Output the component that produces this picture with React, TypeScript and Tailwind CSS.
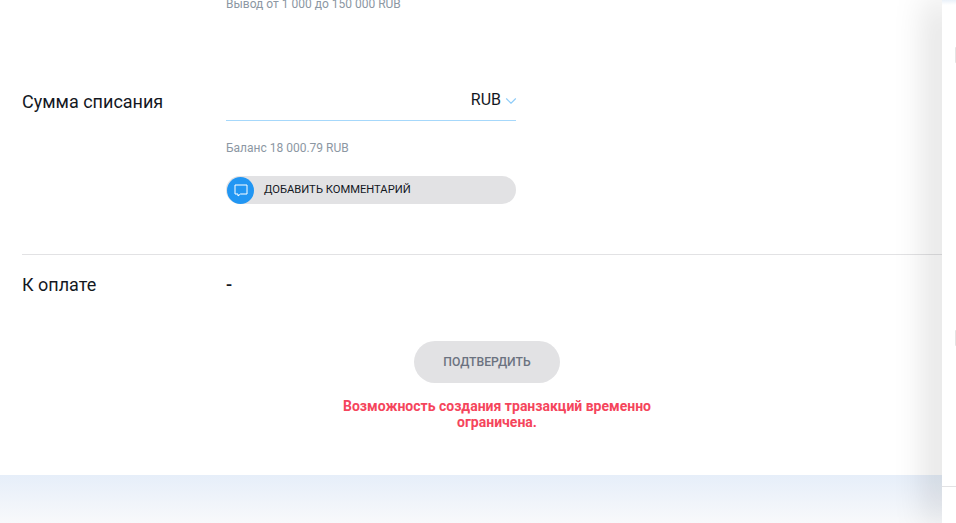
import { ChevronDown } from "lucide-react";

function CommentIcon() {
  return (
    <svg width="14" height="14" viewBox="0 0 14 14" fill="none" stroke="white" strokeWidth="1">
      <path d="M1 2h12v9H6.5L4 13v-2H1z" strokeLinejoin="round" />
    </svg>
  );
}

export default function App() {
  return (
    <div className="flex h-[523px] w-[956px] overflow-hidden bg-white font-['Roboto',sans-serif]">
      <main className="flex w-[942px] shrink-0 flex-col">
        <section className="h-[475px] shrink-0 bg-white">
          <p className="-mt-[5px] ml-[226px] text-xs leading-[18px] text-[#8c97a3]">
            Вывод от 1 000 до 150 000 RUB
          </p>

          <div className="mt-[66px] flex pl-[22px]">
            <div className="w-[204px] pt-[11px] text-lg leading-[24px] text-[#14181f]">Сумма списания</div>
            <div className="w-[290px]">
              <div className="flex h-[42px] items-center justify-end border-b border-[#a6d8fb]">
                <span className="text-base text-[#14181f]">RUB</span>
                <ChevronDown className="-mr-[4px] ml-[1px] mt-[2px] h-[18px] w-[18px] text-[#8fcdf9]" strokeWidth={1.5} />
              </div>
              <p className="mt-[18px] text-xs leading-[18px] text-[#8c97a3]">Баланс 18 000.79 RUB</p>
              <button className="mt-[19px] flex h-[28px] w-full items-center rounded-full bg-[#e2e2e4]">
                <span className="ml-[1px] flex h-[27px] w-[27px] items-center justify-center rounded-full bg-[#2196f3]">
                  <CommentIcon />
                </span>
                <span className="ml-[10px] text-[11.2px] font-normal text-[#14181f]">ДОБАВИТЬ КОММЕНТАРИЙ</span>
              </button>
            </div>
          </div>

          <div className="ml-[22px] mt-[50px] border-t border-[#e2e2e4]" />

          <div className="flex pl-[22px] pt-[18px]">
            <div className="w-[204px] text-lg leading-[24px] text-[#14181f]">К оплате</div>
            <div className="text-lg font-medium leading-[24px] text-[#14181f]">-</div>
          </div>

          <div className="mt-[44px] flex flex-col items-center">
            <button className="ml-[32px] h-[42px] w-[146px] rounded-full bg-[#e2e2e4] text-[12.2px] font-medium text-[#6b7280]">
              ПОДТВЕРДИТЬ
            </button>
            <p className="ml-[52px] mt-[15px] w-[320px] text-center text-sm font-bold leading-[16px] text-[#f5455c]">
              Возможность создания транзакций временно ограничена.
            </p>
          </div>
        </section>
        <div className="flex-1 bg-gradient-to-b from-[#e6eef9] to-[#f8f9fb]" />
      </main>

      <aside className="relative flex w-[14px] shrink-0 flex-col bg-white shadow-[-8px_0_36px_rgba(0,0,0,0.26)]">
        <div className="h-[5px] bg-gradient-to-b from-[#eaf1f9] to-white" />
        <div className="ml-auto mt-[42px] h-[16px] w-[1px] rounded-l-full bg-[#e4e4e4]" />
        <div className="ml-auto mt-[267px] h-[16px] w-[1px] rounded-l-full bg-[#e4e4e4]" />
        <div className="mt-[140px] border-t border-[#e2e2e4]" />
      </aside>
    </div>
  );
}
